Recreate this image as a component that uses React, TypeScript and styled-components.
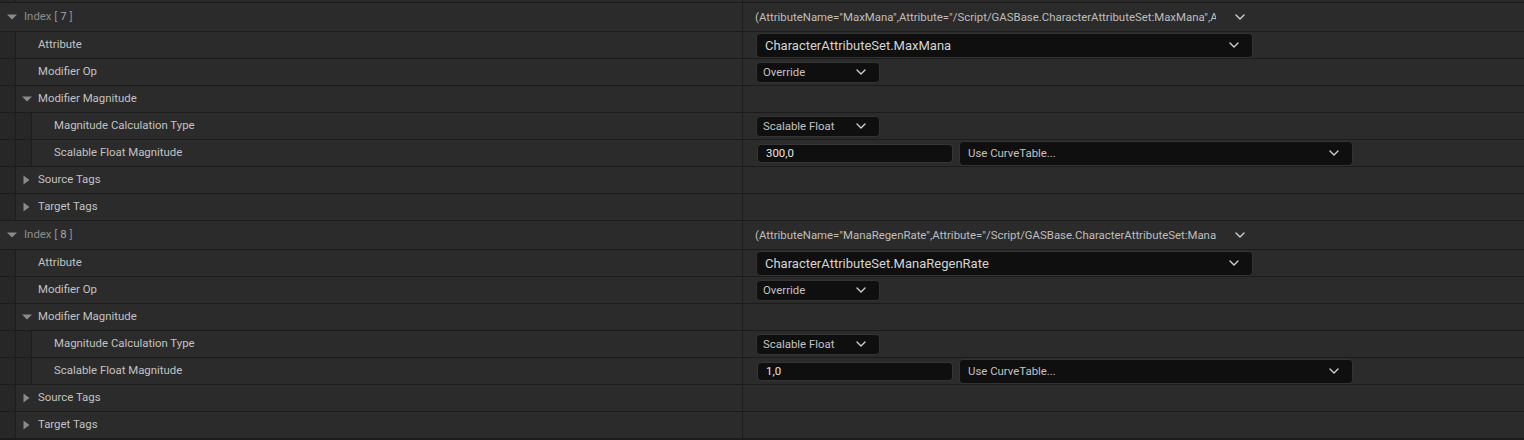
import React from 'react';
import styled, { createGlobalStyle } from 'styled-components';

const GlobalStyle = createGlobalStyle`
  html, body { margin: 0; padding: 0; background: #1b1b1b; }
  body {
    font-family: Roboto, "Noto Sans", "Liberation Sans", sans-serif;
    font-size: 11.4px;
    color: #c2c2c2;
    overflow: hidden;
  }
  * { box-sizing: border-box; }
`;

const Panel = styled.div`
  display: flex;
  flex-direction: column;
  width: 1524px;
`;

const Row = styled.div<{ $h: number }>`
  display: flex;
  height: ${(p) => p.$h}px;
  border-bottom: 1px solid #1b1b1b;
  background: #2b2b2b;
  box-sizing: content-box;
  overflow: hidden;
`;

const NameCell = styled.div`
  width: 743px;
  flex: none;
  display: flex;
  align-items: stretch;
  border-right: 1px solid #1b1b1b;
`;

const Indent = styled.div`
  width: 16px;
  flex: none;
  background: #272727;
  border-right: 1px solid #1d1d1d;
`;

const LabelArea = styled.div<{ $pad: number }>`
  flex: 1;
  display: flex;
  align-items: center;
  padding-left: ${(p) => p.$pad}px;
`;

const ArrowSlot = styled.div<{ $gap: number }>`
  width: 11px;
  flex: none;
  margin-right: ${(p) => p.$gap}px;
  display: flex;
  align-items: center;
  justify-content: center;
`;

const Label = styled.span<{ $dim?: boolean }>`
  color: ${(p) => (p.$dim ? '#8e8e8e' : '#c2c2c2')};
  white-space: nowrap;
  line-height: 1;
  padding-bottom: 1px;
`;

const IndexNum = styled.span`
  color: #a6a6a6;
`;

const ValueCell = styled.div`
  flex: 1;
  display: flex;
  align-items: center;
  padding-left: 12px;
  gap: 6px;
`;

const Summary = styled.div`
  width: 461px;
  overflow: hidden;
  white-space: nowrap;
  color: #bebebe;
  line-height: 14px;
  padding-bottom: 1px;
`;

const SummaryChevron = styled.div`
  margin-left: 13px;
  display: flex;
  align-items: center;
`;

const Combo = styled.div<{ $w: number; $h: number; $big?: boolean; $pl?: number; $ml?: number }>`
  width: ${(p) => p.$w}px;
  height: ${(p) => p.$h}px;
  margin-left: ${(p) => p.$ml ?? 1}px;
  display: flex;
  align-items: center;
  justify-content: space-between;
  padding-left: ${(p) => p.$pl ?? 8}px;
  padding-right: 13px;
  background: #0f0f0f;
  border: 1px solid #333333;
  border-radius: 4px;
  color: ${(p) => (p.$big ? '#d4d4d4' : '#c2c2c2')};
  font-size: ${(p) => (p.$big ? 13 : 11.4)}px;
  white-space: nowrap;
`;

const NumberInput = styled.div`
  width: 196px;
  height: 19px;
  margin-left: 2px;
  display: flex;
  align-items: center;
  padding-left: 8px;
  background: #0f0f0f;
  border: 1px solid #363636;
  border-radius: 4px;
  color: #e6e6e6;
`;

const Chevron = () => (
  <svg width="10" height="6" viewBox="0 0 10 6" fill="none">
    <path d="M1 1 L5 5 L9 1" stroke="#cfcfcf" strokeWidth="1.4" strokeLinecap="round" strokeLinejoin="round" />
  </svg>
);

const Triangle = ({ open }: { open: boolean }) =>
  open ? (
    <svg width="10" height="6" viewBox="0 0 10 6">
      <polygon points="0,0.5 10,0.5 5,5.5" fill="#8a8a8a" />
    </svg>
  ) : (
    <svg width="7" height="10" viewBox="0 0 7 10">
      <polygon points="0.5,0.5 6.5,5 0.5,9.5" fill="#8a8a8a" />
    </svg>
  );

type PropRowProps = {
  depth: number;
  label?: React.ReactNode;
  dim?: boolean;
  arrow?: 'open' | 'closed';
  h?: number;
  pad?: number;
  gap?: number;
  children?: React.ReactNode;
};

const PropRow = ({ depth, label, dim, arrow, h = 26, pad, gap = 6, children }: PropRowProps) => (
  <Row $h={h}>
    <NameCell>
      {Array.from({ length: depth }).map((_, i) => (
        <Indent key={i} />
      ))}
      <LabelArea $pad={pad ?? (arrow ? 5 : 22)}>
        {arrow && (
          <ArrowSlot $gap={gap}>
            <Triangle open={arrow === 'open'} />
          </ArrowSlot>
        )}
        {label && <Label $dim={dim}>{label}</Label>}
      </LabelArea>
    </NameCell>
    <ValueCell>{children}</ValueCell>
  </Row>
);

type GroupProps = {
  index: number;
  attrName: string;
  attrLabel: string;
  magnitude: string;
};

const IndexGroup = ({ index, attrName, attrLabel, magnitude }: GroupProps) => {
  const summary = `(AttributeName="${attrName}",Attribute="/Script/GASBase.CharacterAttributeSet:${attrName}",AttributeOwner="/Script/GASBase.CharacterAttributeSet")`;
  return (
    <>
      <PropRow
        depth={0}
        h={28}
        arrow="open"
        pad={6}
        gap={7}
        dim
        label={
          <>
            Index [ <IndexNum>{index}</IndexNum> ]
          </>
        }
      >
        <Summary>{summary}</Summary>
        <SummaryChevron>
          <Chevron />
        </SummaryChevron>
      </PropRow>
      <PropRow depth={1} label="Attribute">
        <Combo $w={497} $h={25} $big>
          <span>{attrLabel}</span>
          <Chevron />
        </Combo>
      </PropRow>
      <PropRow depth={1} label="Modifier Op">
        <Combo $w={124} $h={21} $pl={6}>
          <span>Override</span>
          <Chevron />
        </Combo>
      </PropRow>
      <PropRow depth={1} arrow="open" label="Modifier Magnitude" />
      <PropRow depth={2} label="Magnitude Calculation Type">
        <Combo $w={124} $h={21} $pl={6}>
          <span>Scalable Float</span>
          <Chevron />
        </Combo>
      </PropRow>
      <PropRow depth={2} label="Scalable Float Magnitude">
        <NumberInput>{magnitude}</NumberInput>
        <Combo $w={394} $h={25} $ml={0}>
          <span>Use CurveTable...</span>
          <Chevron />
        </Combo>
      </PropRow>
      <PropRow depth={1} arrow="closed" label="Source Tags" />
      <PropRow depth={1} arrow="closed" label="Target Tags" />
    </>
  );
};

export default function App() {
  return (
    <>
      <GlobalStyle />
      <Panel>
        <PropRow depth={1} h={2} />
        <IndexGroup index={7} attrName="MaxMana" attrLabel="CharacterAttributeSet.MaxMana" magnitude="300,0" />
        <IndexGroup
          index={8}
          attrName="ManaRegenRate"
          attrLabel="CharacterAttributeSet.ManaRegenRate"
          magnitude="1,0"
        />
      </Panel>
    </>
  );
}
